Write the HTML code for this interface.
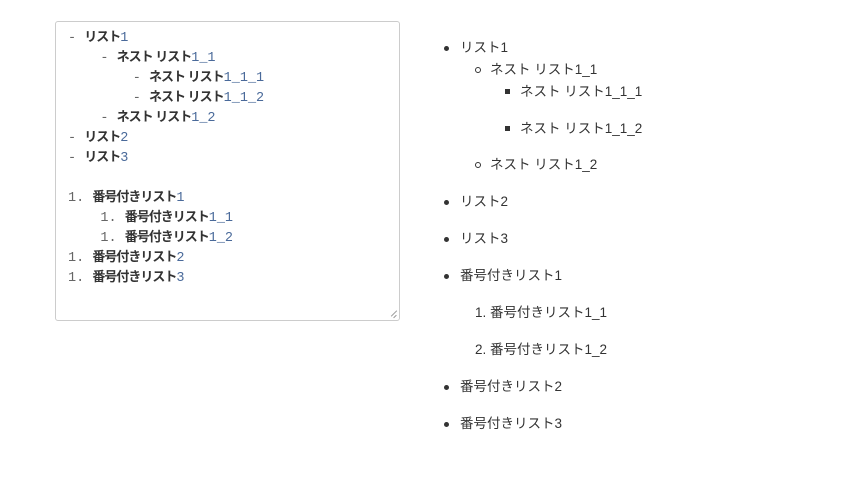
<!DOCTYPE html>
<html><head><meta charset="utf-8"><style>
body{margin:0;width:861px;height:483px;background:#fff;position:relative;overflow:hidden;font-family:"Liberation Sans","Noto Sans CJK JP",sans-serif;color:#333}
.ta{position:absolute;left:55px;top:21px;width:343px;height:298px;border:1px solid #ccc;border-radius:3px}
.l{position:absolute;left:68px;font-family:"Liberation Mono","Noto Sans CJK JP",monospace;font-size:13.5px;white-space:pre;color:#666;line-height:20px}
.l b{color:#333;font-family:"Liberation Sans","Noto Sans CJK JP",sans-serif;font-size:13px;font-weight:bold;letter-spacing:-1px}
.l i{font-style:normal;color:#4a6a9a}
.r{position:absolute;font-size:13.5px;line-height:18px;white-space:pre;color:#333}
.d{position:absolute;width:5px;height:5px;border-radius:50%;background:#333}
.c{position:absolute;width:4px;height:4px;border-radius:50%;border:1px solid #333}
.s{position:absolute;width:5px;height:5px;background:#333}
.g{position:absolute;width:10px;height:0;border-top:1px solid #999;transform:rotate(-45deg)}
</style></head><body>
<div class="ta"></div>
<div class="g" style="left:390px;top:313px;width:8px"></div>
<div class="g" style="left:393px;top:316px;width:4px"></div>
<div class="l" style="top:27px">- <b>リスト</b><i>1</i></div>
<div class="l" style="top:47px">    - <b>ネスト リスト</b><i>1_1</i></div>
<div class="l" style="top:67px">        - <b>ネスト リスト</b><i>1_1_1</i></div>
<div class="l" style="top:87px">        - <b>ネスト リスト</b><i>1_1_2</i></div>
<div class="l" style="top:107px">    - <b>ネスト リスト</b><i>1_2</i></div>
<div class="l" style="top:127px">- <b>リスト</b><i>2</i></div>
<div class="l" style="top:147px">- <b>リスト</b><i>3</i></div>
<div class="l" style="top:187px">1. <b>番号付きリスト</b><i>1</i></div>
<div class="l" style="top:207px">    1. <b>番号付きリスト</b><i>1_1</i></div>
<div class="l" style="top:227px">    1. <b>番号付きリスト</b><i>1_2</i></div>
<div class="l" style="top:247px">1. <b>番号付きリスト</b><i>2</i></div>
<div class="l" style="top:267px">1. <b>番号付きリスト</b><i>3</i></div>

<div class="d" style="left:444px;top:46px"></div><div class="r" style="left:460px;top:39px">リスト1</div>
<div class="c" style="left:475px;top:67px"></div><div class="r" style="left:490px;top:61px">ネスト リスト1_1</div>
<div class="s" style="left:505px;top:89px"></div><div class="r" style="left:520px;top:83px">ネスト リスト1_1_1</div>
<div class="s" style="left:505px;top:126px"></div><div class="r" style="left:520px;top:120px">ネスト リスト1_1_2</div>
<div class="c" style="left:475px;top:162px"></div><div class="r" style="left:490px;top:156px">ネスト リスト1_2</div>
<div class="d" style="left:444px;top:200px"></div><div class="r" style="left:460px;top:193px">リスト2</div>
<div class="d" style="left:444px;top:237px"></div><div class="r" style="left:460px;top:230px">リスト3</div>
<div class="d" style="left:444px;top:274px"></div><div class="r" style="left:460px;top:267px">番号付きリスト1</div>
<div class="r" style="left:475px;top:304px">1. 番号付きリスト1_1</div>
<div class="r" style="left:475px;top:341px">2. 番号付きリスト1_2</div>
<div class="d" style="left:444px;top:385px"></div><div class="r" style="left:460px;top:378px">番号付きリスト2</div>
<div class="d" style="left:444px;top:422px"></div><div class="r" style="left:460px;top:415px">番号付きリスト3</div>
</body></html>
